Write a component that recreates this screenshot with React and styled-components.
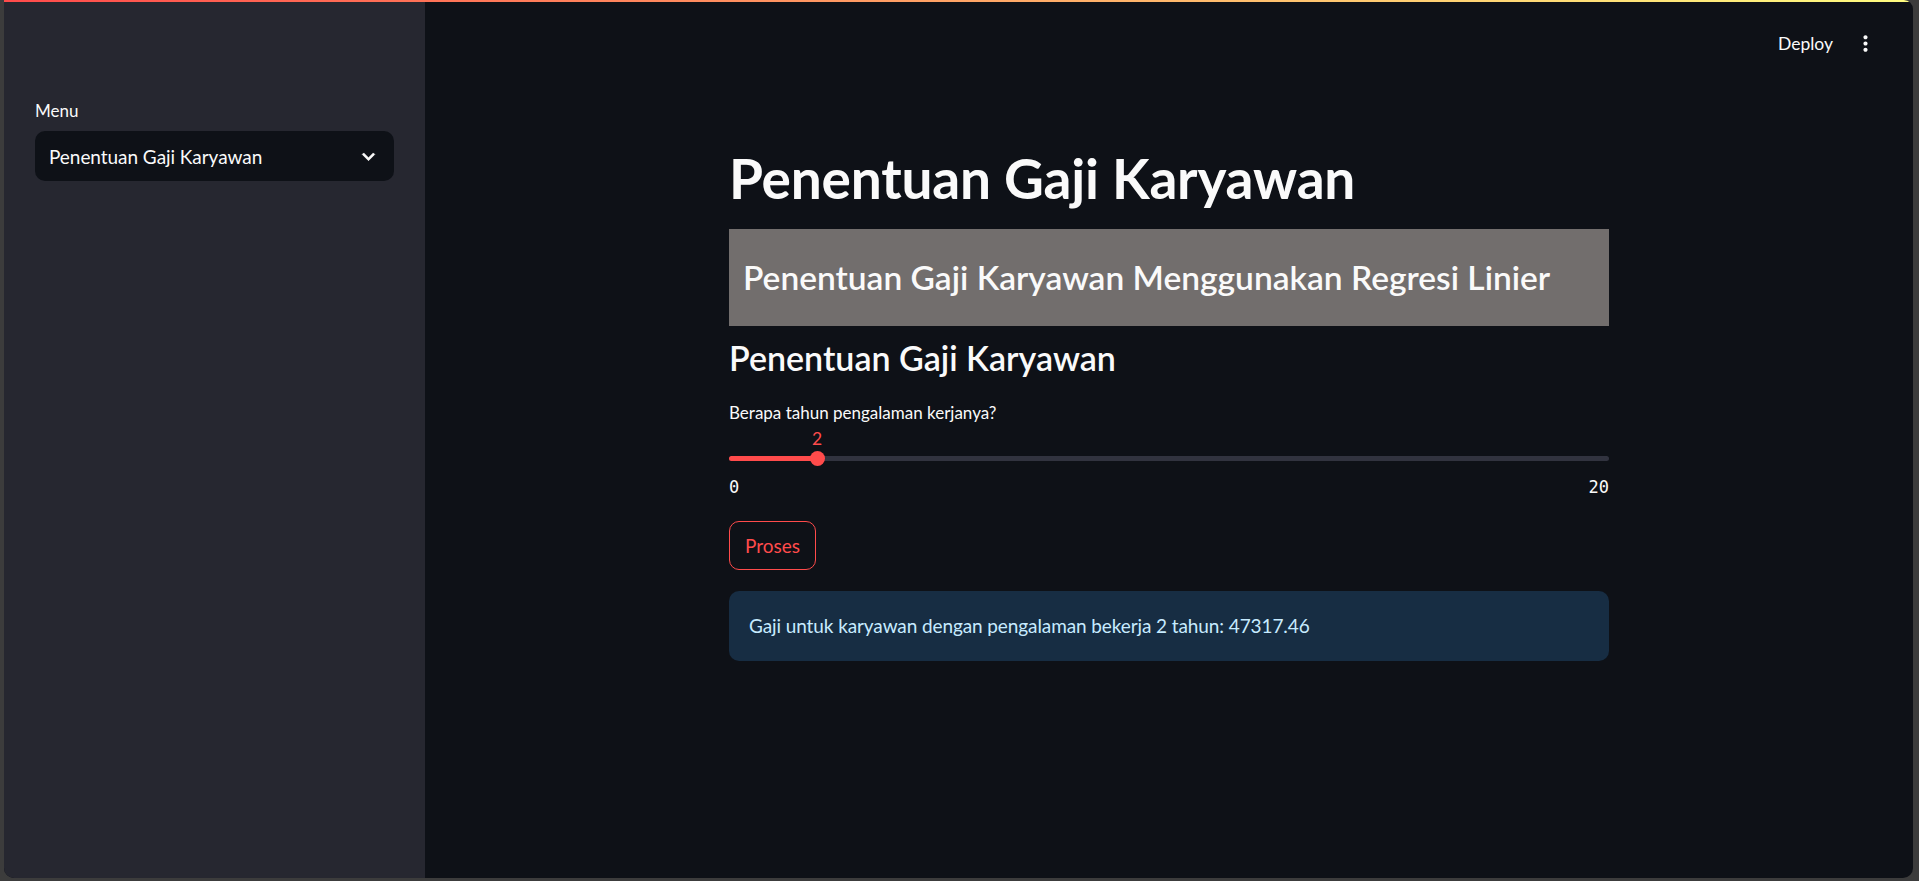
import React from "react";
import styled, { createGlobalStyle } from "styled-components";

const GlobalStyle = createGlobalStyle`
  html, body { margin: 0; padding: 0; background: #3c3c3c; }
  body { font-family: Lato, "Noto Sans", sans-serif; color: #fafafa; }
  * { box-sizing: border-box; }
`;

const Frame = styled.div`
  width: 1919px;
  height: 881px;
  padding: 0 6px 3px 4px;
  background: #3c3c3c;
`;

const Window = styled.div`
  position: relative;
  display: flex;
  height: 100%;
  border-radius: 0 9px 10px 10px;
  overflow: hidden;
  background: #0e1117;
`;

const Decoration = styled.div`
  position: absolute;
  top: 0;
  left: 0;
  right: 0;
  height: 2px;
  background: linear-gradient(90deg, #ff4b4b, #fffd80);
  z-index: 2;
`;

const Sidebar = styled.aside`
  width: 421px;
  flex: none;
  background: #262730;
  padding: 97px 31px 0;
`;

const FieldLabel = styled.div`
  font-size: 17px;
  line-height: 28px;
  margin-bottom: ${(p) => p.$gap || 6}px;
  color: #fafafa;
`;

const Select = styled.div`
  height: 50px;
  border-radius: 10px;
  background: #0e1117;
  display: flex;
  align-items: center;
  justify-content: space-between;
  padding: 0 13px 0 14px;
  font-size: 19px;
  letter-spacing: -0.05px;
  color: #fafafa;
`;

const Main = styled.main`
  flex: 1;
  display: flex;
  flex-direction: column;
`;

const Header = styled.header`
  height: 86px;
  flex: none;
  display: flex;
  align-items: center;
  justify-content: flex-end;
  padding-right: 35px;
  gap: 20px;
`;

const HeaderButton = styled.span`
  font-size: 17.5px;
  color: #fafafa;
`;

const Content = styled.div`
  width: 880px;
  margin: 0 auto;
  padding-top: 59px;
  display: flex;
  flex-direction: column;
`;

const Title = styled.h1`
  margin: 0;
  font-size: 55px;
  line-height: 66px;
  font-weight: 700;
  letter-spacing: -0.2px;
  color: #fafafa;
`;

const Banner = styled.h3`
  margin: 18px 0 0;
  background: #726e6d;
  padding: 27px 14px 28px;
  font-size: 33.5px;
  line-height: 42px;
  font-weight: 600;
  color: #fafafa;
`;

const SubHeader = styled.h3`
  margin: 11px 0 0;
  font-size: 34px;
  line-height: 42px;
  font-weight: 600;
  color: #fafafa;
`;

const SliderBlock = styled.div`
  margin-top: 20px;
`;

const SliderArea = styled.div`
  position: relative;
  height: 34px;
`;

const Track = styled.div`
  position: absolute;
  left: 0;
  right: 0;
  top: 23px;
  height: 5px;
  border-radius: 3px;
  background: #31333f;
`;

const Fill = styled.div`
  position: absolute;
  left: 0;
  top: 0;
  bottom: 0;
  border-radius: 3px;
  background: #ff4b4b;
`;

const Thumb = styled.div`
  position: absolute;
  top: 50%;
  width: 15px;
  height: 15px;
  margin: -7.5px 0 0 -7.5px;
  border-radius: 50%;
  background: #ff4b4b;
`;

const ThumbValue = styled.div`
  position: absolute;
  top: -5px;
  transform: translateX(-50%);
  font-size: 17.5px;
  line-height: 22px;
  color: #ff4b4b;
`;

const Ticks = styled.div`
  display: flex;
  justify-content: space-between;
  margin-top: 6px;
  font-family: "DejaVu Sans Mono", "Liberation Mono", monospace;
  font-size: 17px;
  line-height: 28px;
  color: #fafafa;
`;

const Button = styled.button`
  align-self: flex-start;
  margin-top: 20px;
  height: 49px;
  padding: 0 15px;
  border: 1px solid #ff4b4b;
  border-radius: 10px;
  background: transparent;
  color: #ff4b4b;
  font-family: Lato, "Noto Sans", sans-serif;
  font-size: 19px;
`;

const Info = styled.div`
  margin-top: 21px;
  border-radius: 10px;
  background: #172d43;
  color: #c7ebff;
  padding: 19px 20px;
  font-size: 19px;
  letter-spacing: -0.1px;
  line-height: 32px;
`;

const ChevronDown = () => (
  <svg width="25" height="25" viewBox="0 0 24 24" fill="#fafafa">
    <path d="M7.41 8.59L12 13.17l4.59-4.58L18 10l-6 6-6-6 1.41-1.41z" stroke="#fafafa" strokeWidth="0.6" />
  </svg>
);

const MoreVert = () => (
  <svg width="25" height="25" viewBox="0 0 24 24" fill="#fafafa">
    <path d="M12 8c1.1 0 2-.9 2-2s-.9-2-2-2-2 .9-2 2 .9 2 2 2zm0 2c-1.1 0-2 .9-2 2s.9 2 2 2 2-.9 2-2-.9-2-2-2zm0 6c-1.1 0-2 .9-2 2s.9 2 2 2 2-.9 2-2-.9-2-2-2z" />
  </svg>
);

const Slider = ({ value, min, max }) => {
  const pct = ((value - min) / (max - min)) * 100;
  return (
    <SliderArea>
      <ThumbValue style={{ left: `${pct}%` }}>{value}</ThumbValue>
      <Track>
        <Fill style={{ width: `${pct}%` }} />
        <Thumb style={{ left: `${pct}%` }} />
      </Track>
    </SliderArea>
  );
};

export default function App() {
  return (
    <>
      <GlobalStyle />
      <Frame>
        <Window>
          <Decoration />
          <Sidebar>
            <FieldLabel>Menu</FieldLabel>
            <Select>
              <span>Penentuan Gaji Karyawan</span>
              <ChevronDown />
            </Select>
          </Sidebar>
          <Main>
            <Header>
              <HeaderButton>Deploy</HeaderButton>
              <MoreVert />
            </Header>
            <Content>
              <Title>Penentuan Gaji Karyawan</Title>
              <Banner>Penentuan Gaji Karyawan Menggunakan Regresi Linier</Banner>
              <SubHeader>Penentuan Gaji Karyawan</SubHeader>
              <SliderBlock>
                <FieldLabel $gap={0}>Berapa tahun pengalaman kerjanya?</FieldLabel>
                <Slider value={2} min={0} max={20} />
                <Ticks>
                  <span>0</span>
                  <span>20</span>
                </Ticks>
              </SliderBlock>
              <Button>Proses</Button>
              <Info>Gaji untuk karyawan dengan pengalaman bekerja 2 tahun: 47317.46</Info>
            </Content>
          </Main>
        </Window>
      </Frame>
    </>
  );
}
